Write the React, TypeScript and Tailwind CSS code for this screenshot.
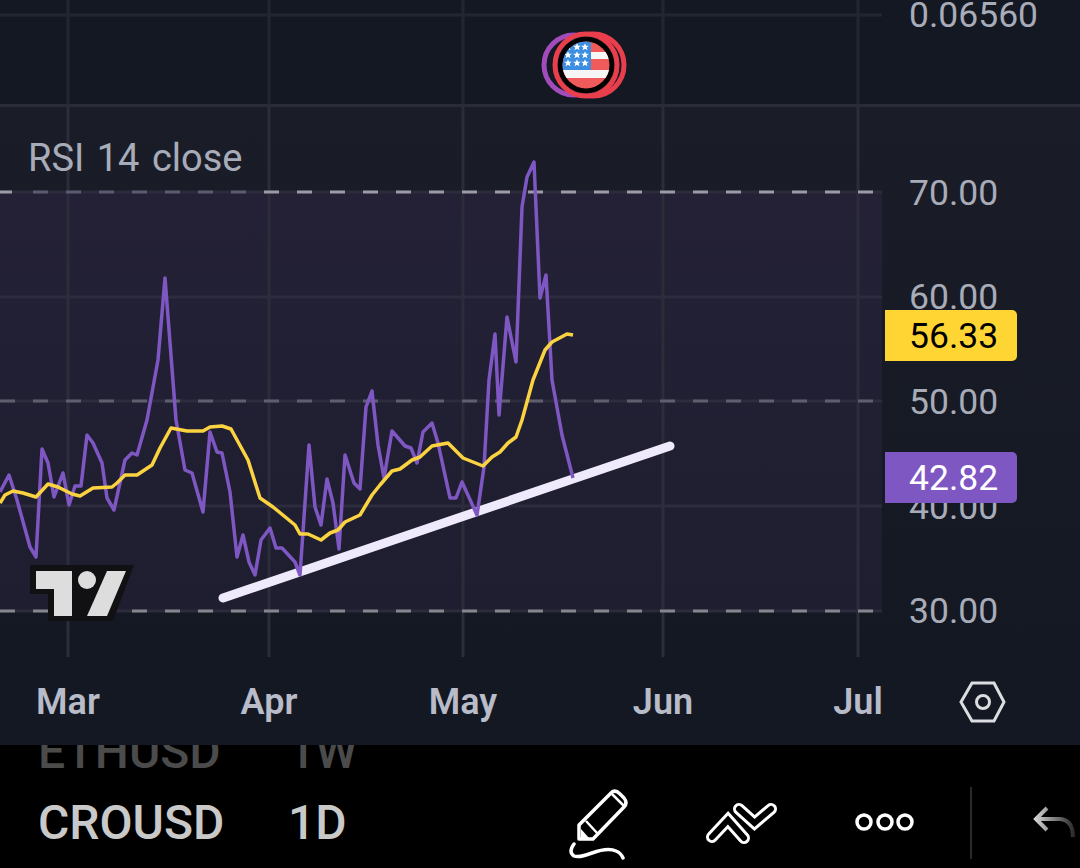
// RSI series traced from the chart, in page pixels
const RSI_LINE =
  '0,492 9,475 17,500 30,547 36,557 42,449 48,463 54,497 63,473 69,505 75,486 81,486 87,435 93,443 102,463 107,498 114,510 125,460 132,453 137,455 147,420 158,360 165,278 176,420 185,470 192,473 203,512 210,432 217,452 222,453 230,492 237,557 243,535 249,562 255,575 261,540 270,528 276,548 282,548 295,562 300,575 309,445 315,507 321,525 327,479 333,503 339,549 345,455 354,483 360,489 366,407 372,391 378,445 384,478 392,431 405,446 411,448 417,463 423,432 432,423 438,443 450,498 456,498 462,482 477,515 484,467 489,380 495,334 499,415 507,317 516,362 522,207 527,177 534,162 540,298 546,275 552,380 562,435 573,478'

const SMA_LINE =
  '0,503 5,495 13,491 23,493 36,497 48,484 58,487 72,494 80,496 93,488 112,487 117,483 125,475 137,475 152,465 160,448 171,428 187,431 203,431 210,427 222,426 231,429 248,460 260,498 273,507 295,525 300,534 308,534 321,540 330,533 338,530 345,522 360,515 372,495 380,485 392,471 400,469 412,460 420,457 432,446 448,443 463,458 483,466 492,457 500,452 508,443 516,437 522,420 533,380 545,350 552,342 567,334 573,335'

const GRID_X = [68, 269, 463, 663, 858]
const PRICE_LABELS = [
  { y: 193, text: '70.00' },
  { y: 297, text: '60.00' },
  { y: 402, text: '50.00' },
  { y: 507, text: '40.00' },
  { y: 611, text: '30.00' },
]
const MONTHS = [
  { x: 68, text: 'Mar' },
  { x: 269, text: 'Apr' },
  { x: 463, text: 'May' },
  { x: 663, text: 'Jun' },
  { x: 858, text: 'Jul' },
]
const STAR_POINTS = [568, 577, 585].flatMap((x) => [47, 55, 63].map((y) => ({ x, y })))

function FlagBadge() {
  return (
    <g>
      <circle cx="574" cy="65" r="30" fill="none" stroke="#a24bbb" strokeWidth="5" />
      <circle cx="593" cy="65" r="31" fill="#141823" stroke="#e93e4c" strokeWidth="5" />
      <circle cx="586" cy="65" r="31" fill="#141823" stroke="#e93e4c" strokeWidth="5" />
      <circle cx="586" cy="65" r="28" fill="#000" />
      <clipPath id="flag-clip">
        <circle cx="586" cy="65" r="23.5" />
      </clipPath>
      <g clipPath="url(#flag-clip)">
        <rect x="560" y="40" width="52" height="50" fill="#ef5a5a" />
        <rect x="590" y="52" width="22" height="7" fill="#f6f6f6" />
        <rect x="560" y="70" width="52" height="8" fill="#f6f6f6" />
        <rect x="560" y="40" width="31" height="30" fill="#3c8ee0" />
        {STAR_POINTS.map((s) => (
          <polygon
            key={`${s.x}-${s.y}`}
            transform={`translate(${s.x} ${s.y}) scale(0.42)`}
            points="0,-9 2.6,-3 9,-2.8 4,1.4 5.8,8 0,4.4 -5.8,8 -4,1.4 -9,-2.8 -2.6,-3"
            fill="#fff"
          />
        ))}
      </g>
    </g>
  )
}

function TvLogo() {
  return (
    <g>
      <polygon points="30,565 134,565 113,621 48,621 48,594 30,594" fill="#111114" />
      <polygon points="36,571 72,571 72,616 54,616 54,589 36,589" fill="#dddddd" />
      <circle cx="87" cy="580" r="9" fill="#dddddd" />
      <polygon points="107,571 126,571 107,616 87,616" fill="#dddddd" />
    </g>
  )
}

function TopPane() {
  return (
    <div className="flex h-[104px]">
      <svg viewBox="0 0 882 104" className="h-[104px] w-[882px] shrink-0">
        <line x1="0" x2="882" y1="15" y2="15" stroke="#232631" strokeWidth="3" />
        {GRID_X.map((x) => (
          <line key={x} x1={x} x2={x} y1="0" y2="104" stroke="#232631" strokeWidth="3" />
        ))}
        <FlagBadge />
      </svg>
      <div className="pl-[27px] text-[35.5px] leading-[30px] text-[#a8acb9]">0.06560</div>
    </div>
  )
}

function RsiChart() {
  return (
    <svg viewBox="0 107 882 553" className="h-[553px] w-[882px] shrink-0">
      <defs>
        <linearGradient id="band-fade" x1="0" x2="0" y1="0" y2="1">
          <stop offset="0" stopColor="#242136" />
          <stop offset="1" stopColor="#1e1e30" />
        </linearGradient>
      </defs>
      <rect x="0" y="192" width="882" height="419" fill="url(#band-fade)" />
      {GRID_X.map((x) => (
        <line key={x} x1={x} x2={x} y1="107" y2="657" stroke="#2b2d3a" strokeWidth="3" />
      ))}
      <line x1="0" x2="882" y1="297" y2="297" stroke="#2d2c3f" strokeWidth="3" />
      <line x1="0" x2="882" y1="506" y2="506" stroke="#2d2c3f" strokeWidth="3" />
      <line x1="0" x2="882" y1="192" y2="192" stroke="#2b2b3b" strokeWidth="3" />
      <line x1="0" x2="882" y1="401" y2="401" stroke="#2d2c3f" strokeWidth="3" />
      <line x1="0" x2="882" y1="611" y2="611" stroke="#2b2b3b" strokeWidth="3" />
      <line x1="0" x2="12" y1="192" y2="192" stroke="#9c9aa6" strokeWidth="3" />
      <line x1="33" x2="260" y1="192" y2="192" stroke="#5c5a6e" strokeWidth="3" strokeDasharray="15 18" />
      <line x1="264" x2="882" y1="192" y2="192" stroke="#9c9aa6" strokeWidth="3" strokeDasharray="15 18" />
      <line x1="0" x2="882" y1="401" y2="401" stroke="#5f5e6f" strokeWidth="3" strokeDasharray="15 18" />
      <line x1="0" x2="882" y1="611" y2="611" stroke="#85858e" strokeWidth="3" strokeDasharray="15 18" />
      <TvLogo />
      <line x1="223" y1="598" x2="670" y2="446" stroke="#efeafb" strokeWidth="9" strokeLinecap="round" />
      <polyline points={RSI_LINE} fill="none" stroke="#7e57c2" strokeWidth="3.5" strokeLinejoin="round" />
      <polyline points={SMA_LINE} fill="none" stroke="#fbd341" strokeWidth="3.5" strokeLinejoin="round" />
    </svg>
  )
}

function PriceAxis() {
  return (
    <div className="relative flex-1">
      {PRICE_LABELS.map((l) => (
        <span
          key={l.text}
          className="absolute left-[27px] -translate-y-1/2 text-[35.5px] leading-none text-[#a8acb9]"
          style={{ top: l.y - 106 }}
        >
          {l.text}
        </span>
      ))}
      <div className="absolute left-[3px] top-[203px] flex h-[51px] w-[132px] items-center rounded-r-[5px] bg-[#ffd533] pl-[24px] pt-[2px] text-[35.5px] text-black">
        56.33
      </div>
      <div className="absolute left-[3px] top-[345px] flex h-[51px] w-[132px] items-center rounded-r-[5px] bg-[#7e57c2] pl-[24px] pt-[2px] text-[35.5px] text-white">
        42.82
      </div>
    </div>
  )
}

function TimeAxis() {
  return (
    <div className="flex h-[85px]">
      <div className="relative w-[882px] shrink-0">
        {MONTHS.map((m) => (
          <span
            key={m.text}
            className="absolute top-[42px] -translate-x-1/2 -translate-y-1/2 text-[36px] font-semibold leading-none text-[#b8bbc8]"
            style={{ left: m.x }}
          >
            {m.text}
          </span>
        ))}
      </div>
      <svg viewBox="958 680 50 44" className="ml-[76px] mt-[20px] h-[44px] w-[50px]">
        <polygon points="961,702 972,683 994,683 1004,702 994,721 972,721" fill="none" stroke="#dcdde0" strokeWidth="3" />
        <circle cx="983" cy="702" r="6.5" fill="none" stroke="#dcdde0" strokeWidth="3" />
      </svg>
    </div>
  )
}

function Toolbar() {
  return (
    <div className="flex h-[123px] overflow-hidden bg-black">
      <div className="ml-[38px] mt-[-29px] w-[250px] shrink-0 text-[48px] font-medium leading-[71px]">
        <div className="text-[#4b4b4b]">ETHUSD</div>
        <div className="text-[#c9c9c9]">CROUSD</div>
      </div>
      <div className="mt-[-29px] w-[280px] shrink-0 text-[48px] font-medium leading-[71px]">
        <div className="text-[#4b4b4b]">1W</div>
        <div className="text-[#c9c9c9]">1D</div>
      </div>
      <svg viewBox="568 788 62 72" className="mt-[43px] h-[72px] w-[62px] shrink-0" fill="none" stroke="#fff" strokeWidth="3.5">
        <path d="M579 839V825L611 793Q615 789 620 794L624 798Q628 803 624 807L593 839Z" strokeLinejoin="round" />
        <path d="M586 821L598 834M612 794L624 806" strokeWidth="2.5" />
        <path d="M581 838V829L589 838Z" fill="#fff" stroke="none" />
        <path d="M574 844Q568 852 574 856Q579 858 592 853Q608 847 616 851Q621 853 623 858" strokeLinecap="round" />
      </svg>
      <svg viewBox="704 800 74 46" className="ml-[74px] mt-[55px] h-[46px] w-[74px] shrink-0" fill="none" strokeLinecap="round" strokeLinejoin="miter">
        <path d="M712 837L728 820L744 838" stroke="#fff" strokeWidth="12" />
        <path d="M739 809L754.500 823L771 809" stroke="#fff" strokeWidth="12" />
        <path d="M712 837L728 820L744 838" stroke="#000" strokeWidth="6" />
        <path d="M739 809L754.500 823L771 809" stroke="#000" strokeWidth="6" />
      </svg>
      <svg viewBox="854 810 62 24" className="ml-[76px] mt-[65px] h-[24px] w-[62px] shrink-0" fill="none" stroke="#fff" strokeWidth="3.5">
        {[864, 885, 905].map((x) => (
          <circle key={x} cx={x} cy="822" r="7" />
        ))}
      </svg>
      <div className="ml-[54px] mt-[42px] h-[72px] w-[2px] shrink-0 bg-[#2a2a2a]" />
      <svg viewBox="1032 804 48 38" className="ml-[60px] mt-[59px] h-[38px] w-[48px] shrink-0" fill="none" strokeWidth="4">
        <defs>
          <linearGradient id="undo-fade" gradientUnits="userSpaceOnUse" x1="1036" x2="1074" y1="820" y2="820">
            <stop offset="0" stopColor="#d0d0d0" />
            <stop offset="1" stopColor="#2a2a2a" />
          </linearGradient>
        </defs>
        <path d="M1047 808L1036 819L1047 830M1036 819H1060Q1073 820 1073 837" stroke="url(#undo-fade)" />
      </svg>
    </div>
  )
}

export default function App() {
  return (
    <div className="h-[868px] w-[1080px] overflow-hidden bg-black font-['Roboto',sans-serif]">
      <div className="h-[745px] bg-[#141823]">
        <TopPane />
        <div className="h-[3px] bg-[#2a2d38]" />
        <div className="relative flex h-[553px] bg-linear-to-b from-[#1a1d28] to-[#141823]">
          <RsiChart />
          <PriceAxis />
          <span className="absolute left-[28px] top-[31px] text-[38px] leading-[40px] text-[#a8acb9] [word-spacing:3px]">RSI 14 close</span>
        </div>
        <TimeAxis />
      </div>
      <Toolbar />
    </div>
  )
}
